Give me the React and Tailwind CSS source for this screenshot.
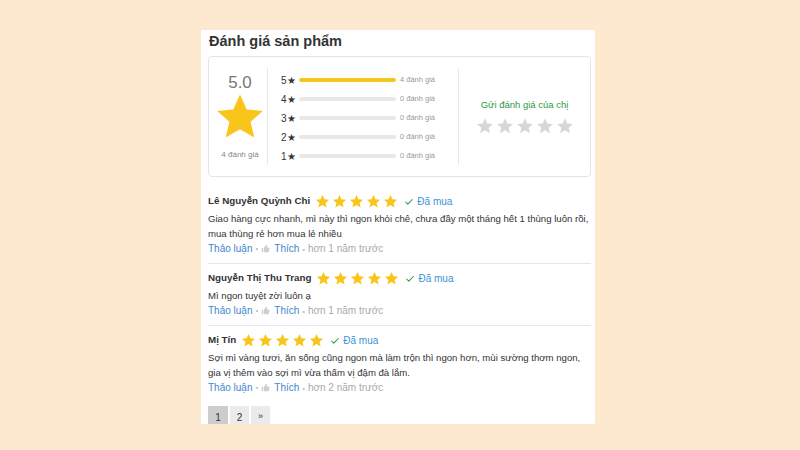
import React from 'react';
import { Check } from 'lucide-react';

const STAR = 'M12 1.6l3.1 6.9 7.4.7-5.6 5 1.7 7.3L12 17.7l-6.6 3.8 1.7-7.3-5.6-5 7.4-.7z';

function Star({ className }) {
  return (
    <svg viewBox="0 0 24 24" className={className} fill="currentColor">
      <path d={STAR} />
    </svg>
  );
}

function ThumbUp() {
  return (
    <svg viewBox="0 0 24 24" className="w-[9px] h-[9px] text-[#cfcfcf]" fill="currentColor">
      <path d="M2 10h4v12H2zM8 22V10l6-8c1.5 0 2.5 1 2.2 2.6L15.4 9H21c1.2 0 2 1 1.8 2.2l-1.6 8.6c-.2 1.2-1.2 2.2-2.4 2.2z" />
    </svg>
  );
}

const bars = [
  { n: 5, count: 4, pct: 100 },
  { n: 4, count: 0, pct: 0 },
  { n: 3, count: 0, pct: 0 },
  { n: 2, count: 0, pct: 0 },
  { n: 1, count: 0, pct: 0 },
];

const reviews = [
  {
    name: 'Lê Nguyễn Quỳnh Chi',
    text: 'Giao hàng cực nhanh, mì này thì ngon khỏi chê, chưa đầy một tháng hết 1 thùng luôn rồi, mua thùng rẻ hơn mua lẻ nhiều',
    time: 'hơn 1 năm trước',
  },
  {
    name: 'Nguyễn Thị Thu Trang',
    text: 'Mì ngon tuyệt zời luôn ạ',
    time: 'hơn 1 năm trước',
  },
  {
    name: 'Mị Tín',
    text: 'Sợi mì vàng tươi, ăn sống cũng ngon mà làm trộn thì ngon hơn, mùi sường thơm ngon, gia vị thêm vào sợi mì vừa thấm vị đậm đà lắm.',
    time: 'hơn 2 năm trước',
  },
];

function Review({ r, last }) {
  return (
    <div className={`pt-[5px] ${last ? 'pb-[4px]' : 'pb-[7px] border-b border-[#e6e6e6]'}`}>
      <div className="h-[19px] flex items-center">
        <span className="text-[9.8px] font-bold text-[#333]">{r.name}</span>
        <div className="flex items-center gap-[2px] ml-[5px] text-[#f8c51b]">
          {[0, 1, 2, 3, 4].map((i) => (
            <Star key={i} className="w-[15px] h-[15px]" />
          ))}
        </div>
        <span className="flex items-center ml-[6px] text-[10px] text-[#3a93d8]">
          <Check size={10} strokeWidth={2.5} className="text-[#2a9b3c] mr-[3px]" />
          Đã mua
        </span>
      </div>
      <p className="text-[9.6px] leading-[15px] text-[#333]">{r.text}</p>
      <div className="h-[15px] flex items-center text-[10px] gap-[3px]">
        <span className="text-[#3f86cf]">Thảo luận</span>
        <span className="text-[#c0c0c0] text-[8px]">•</span>
        <ThumbUp />
        <span className="text-[#3f86cf] ml-[1px]">Thích</span>
        <span className="text-[#aaa]">
          <span className="text-[8px] text-[#c0c0c0]">•</span> {r.time}
        </span>
      </div>
    </div>
  );
}

export default function App() {
  return (
    <div
      className="w-[800px] h-[450px] bg-[#fde9cf] pl-[201px] pt-[30px] overflow-hidden"
      style={{ fontFamily: '"Liberation Sans", Arial, sans-serif' }}
    >
      <div className="w-[394px] h-[394px] bg-white pl-[7px] pr-[4px] overflow-hidden">
        <div className="h-[22px] pl-[1px] text-[14.5px] leading-[22px] font-bold text-[#333]">
          Đánh giá sản phẩm
        </div>

        {/* summary box */}
        <div className="mt-[4px] h-[121px] border border-[#e4e4e4] rounded-[4px] flex items-center">
          <div className="w-[58px] pl-[4px] flex flex-col items-center">
            <div className="text-[17px] text-[#777] leading-[20px]">5.0</div>
            <Star className="w-[52px] h-[52px] text-[#f8c51b] -my-[2px]" />
            <div className="text-[8px] text-[#888] mt-[8px]">4 đánh giá</div>
          </div>
          <div className="h-[97px] w-px bg-[#e8e8e8]" />
          <div className="w-[190px] pl-[13px] pt-[3px] flex flex-col gap-[5px]">
            {bars.map((b) => (
              <div key={b.n} className="h-[14px] flex items-center">
                <span className="text-[10px] text-[#333] w-[18px]">{b.n}★</span>
                <div className="w-[97px] h-[4px] bg-[#e8e8e8] rounded-full overflow-hidden">
                  <div className="h-full bg-[#f8c51b] rounded-full" style={{ width: `${b.pct}%` }} />
                </div>
                <span className="text-[7.5px] text-[#999] ml-[4px]">{b.count} đánh giá</span>
              </div>
            ))}
          </div>
          <div className="h-[97px] w-px bg-[#e8e8e8]" />
          <div className="flex-1 flex flex-col items-center">
            <div className="text-[9.5px] text-[#2b9a44]">Gửi đánh giá của chị</div>
            <div className="flex gap-[2px] mt-[4px] text-[#d7d7d7]">
              {[0, 1, 2, 3, 4].map((i) => (
                <Star key={i} className="w-[18px] h-[18px]" />
              ))}
            </div>
          </div>
        </div>

        <div className="mt-[10px]">
          {reviews.map((r, i) => (
            <Review key={i} r={r} last={i === reviews.length - 1} />
          ))}
        </div>

        <div className="flex gap-[2px] mt-[7px]">
          <span className="w-[20px] h-[22px] flex items-center justify-center text-[10px] text-[#333] bg-[#cdcdcd]">1</span>
          <span className="w-[19px] h-[22px] flex items-center justify-center text-[10px] text-[#333] bg-[#ebebeb]">2</span>
          <span className="w-[19px] h-[22px] flex items-center justify-center text-[9px] text-[#333] bg-[#ebebeb]">»</span>
        </div>
      </div>
    </div>
  );
}
